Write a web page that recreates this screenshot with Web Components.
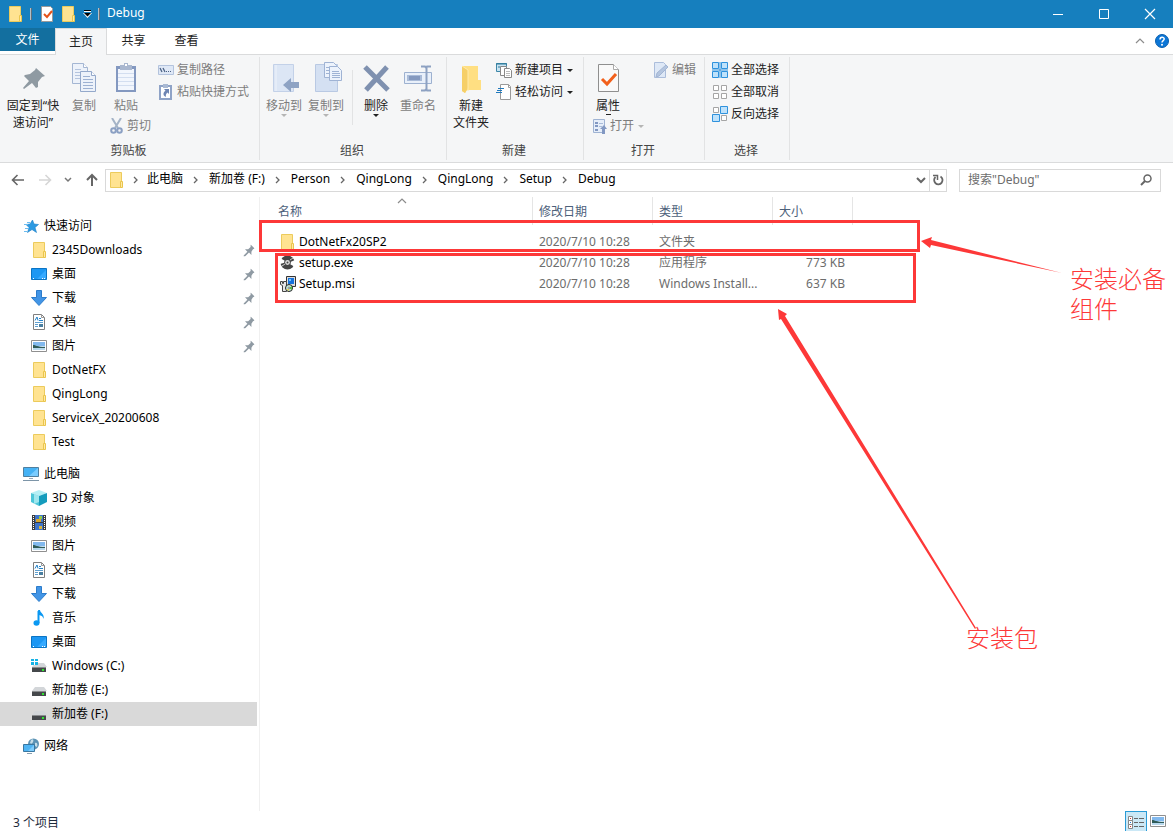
<!DOCTYPE html>
<html lang="zh-CN">
<head>
<meta charset="utf-8">
<title>Debug</title>
<style>
  html, body { margin: 0; height: 100%; }
  body {
    font: 12px/16px "Noto Sans", "Noto Sans CJK SC", sans-serif;
    color: #000; background: #fff; overflow: hidden;
  }
</style>
</head>
<body>
<explorer-window></explorer-window>

<script>
const folder = '<path d="M1.5 .5h11v15h-11z" fill="#ffe391" stroke="#eccb5c"/><path d="M11.500 9.500h2v6h-2z" fill="#ffe9a6" stroke="#eac54c"/>';
const pin = '<path d="M9 0l5 5-2 1-2 3 0 4-3-3-5 5-2 0 0-1 5-5-3-3 4 0 3-3z" fill="#8f9aa3"/>';
const drive = '<path d="M4 5h9l3 4H1z" fill="#d3d6d9"/><path d="M1 9h14v5H1z" fill="#45484b"/><path d="M1 9h14v1H1z" fill="#8a8c8e"/><path d="M11 11h2v2h-2z" fill="#2fe62f"/>';

/* name: [width, height, svg body] */
const ICONS = {
  folder: [16, 16, folder],
  navfolder: [16, 16, `<g transform="translate(1 0)">${folder}</g>`],
  pin: [14, 15, pin],
  check: [16, 16, '<path d="M2.500 .5h9l2 2v13h-11z" fill="#fff" stroke="#9a9a9a"/><path d="M5 8l3 3 5-6" fill="none" stroke="#e5531a" stroke-width="2"/>'],
  qat: [9, 10, '<path d="M1 1.500h7" stroke="#000"/><path d="M1 2.500h7" stroke="#fff"/><path d="M0 4h9L4.500 9z" fill="#fff"/><path d="M1 4h7L4.500 7.500z" fill="#000"/>'],
  min: [12, 12, '<path d="M1 6.500h10" stroke="#fff"/>'],
  max: [12, 12, '<path d="M1.500 1.500h9v9h-9z" fill="none" stroke="#fff"/>'],
  close: [12, 12, '<path d="M1 1l10 10M11 1L1 11" stroke="#fff" stroke-width="1.200"/>'],
  collapse: [10, 6, '<path d="M1 5l4-4 4 4" fill="none" stroke="#8c8c8c" stroke-width="1.200"/>'],
  help: [14, 14, '<circle cx="7" cy="7" r="6.500" fill="#0c76d6" stroke="#0a5fae"/><path d="M5 5.500c0-3 4.200-2.800 4.200-.4C9.200 6.700 7 6.700 7 8.600" fill="none" stroke="#fff" stroke-width="1.500"/><circle cx="7" cy="10.700" r="1" fill="#fff"/>'],
  bigpin: [32, 32, '<path d="M19 6l9 8-3 1-4 5 0 5-2 1-4-5-8 6-1-1 6-7-5-5 1-1 5-1 5-4z" fill="#8f9aa2"/>'],
  copy: [32, 32, '<path d="M4.500 1.500h11l4 4v16h-15z" fill="#edf2fa" stroke="#a4b6d3"/><path d="M15.500 1.500v4h4" fill="#fff" stroke="#a4b6d3"/><path d="M7 7.500h6M7 10.500h6M7 13.500h6M7 16.500h6" stroke="#b4c4de"/><path d="M12.500 9.500h11l4 4v16h-15z" fill="#edf2fa" stroke="#94a9cb"/><path d="M23.500 9.500v4h4" fill="#fff" stroke="#94a9cb"/><path d="M15 14.500h7M15 17.500h10M15 20.500h10M15 23.500h10M15 26.500h10" stroke="#9db1d2"/>'],
  paste: [32, 32, '<path d="M6 4h20v26H6z" fill="#8398c0"/><path d="M8 7h16v21H8z" fill="#f2f6fd"/><path d="M8 11.500h16M8 15.500h16M8 19.500h16M8 23.500h16" stroke="#d3def0"/><path d="M10 3h4V1h4v2h4v5H10z" fill="#a9b7cf"/><path d="M15 2h2v2h-2z" fill="#fff"/>'],
  path: [16, 12, '<path d="M.5 1.500h15v9H.5z" fill="#dfe8f6" stroke="#b3c3dd"/><path d="M2 4l2 4M5 4l2 4" stroke="#4d6487" stroke-width="1.300"/><path d="M8 7.500h1M10 7.500h1M12 7.500h1" stroke="#4d6487"/>'],
  shortcut: [16, 16, '<path d="M2 2h11v13H2z" fill="#fff" stroke="#8fa3c7" stroke-width="2"/><path d="M5 0h5v4H5z" fill="#a9b9d3"/><path d="M6 5h5v5L9.500 8.500C8 10 7.500 11 8 13 4 11 5.500 8 7.500 6.700z" fill="#6f86b3"/>'],
  cut: [14, 16, '<path d="M2 0l6 10M11 0L5 10" stroke="#a4b3c6" stroke-width="2"/><circle cx="3.500" cy="12.500" r="2.300" fill="none" stroke="#8ba0c3" stroke-width="2"/><circle cx="9.500" cy="12.500" r="2.300" fill="none" stroke="#8ba0c3" stroke-width="2"/>'],
  moveto: [32, 32, '<path d="M5.500 2.500h20v27h-20z" fill="#dce6f5" stroke="#c3d1e8"/><path d="M8 3v26" stroke="#eef3fb"/><path d="M15 23l8-7v4h8v6h-8v4z" fill="#8ea3c4"/>'],
  copyto: [32, 32, '<path d="M5.500 2.500h22v27h-22z" fill="#d4e0f2" stroke="#b9c9e3"/><path d="M14.500 .5h9l3 3v12h-12z" fill="#edf3fc" stroke="#9fb3d4"/><path d="M19.500 4.500h8l4 4v10h-12z" fill="#edf3fc" stroke="#9fb3d4"/><path d="M16 5.500h3M16 8.500h3M16 11.500h3M22 9.500h7M22 11.500h8M22 13.500h8M22 15.500h8" stroke="#9fb3d4"/>'],
  del: [32, 32, '<path d="M5 5l23 23M27 5L6 28" stroke="#7f91b0" stroke-width="5"/>'],
  rename: [32, 32, '<path d="M2.500 10.500h27v11h-27z" fill="#e9f0fa" stroke="#9db1d0"/><path d="M5 13h15v6H5z" fill="#a9bbd8"/><path d="M7 14h11v4H7z" fill="#8499bf"/><path d="M19 4.500h4l1 1 1-1h4M19 28.500h4l1-1 1 1h4M24.500 5v23" fill="none" stroke="#8da1c2" stroke-width="2"/>'],
  newfolder: [32, 32, '<path d="M7 4h16v14h3v10H12l-2 3-3-2z" fill="#ffdf82"/><path d="M7 4l6 4v18l-3 5-3-2z" fill="#f6cf67"/><path d="M7 4l6 4v21" fill="none" stroke="#ffeaab"/>'],
  newitem: [16, 16, '<path d="M.5 1.500h10v8H.5z" fill="#c9e4f2" stroke="#3d87a8"/><path d="M0 2h11M3 4v2M7 4v2" stroke="#2d7899"/><path d="M4.500 4.500h6v9h-6z" fill="#fff" stroke="#888"/><path d="M8.500 6.500h5l2 2v7h-7z" fill="#fff" stroke="#888"/><path d="M10 9.500h4M10 11.500h4M10 13.500h4" stroke="#bbb"/>'],
  access: [16, 16, '<path d="M4.500 .5h8l2 2v13h-10z" fill="#fff" stroke="#9a9a9a"/><path d="M12.500 .5v3h2" fill="none" stroke="#9a9a9a"/><path d="M2 4.500h6M1 6.500h5M0 8.500h6" stroke="#2079bd"/>'],
  props: [32, 32, '<path d="M6.500 2.500h15l5 5v22h-20z" fill="#f9f9f9" stroke="#8f8f8f"/><path d="M21.500 2.500v5h5" fill="#fff" stroke="#aaa"/><path d="M10 17l5 5 9-10" fill="none" stroke="#f2601b" stroke-width="3"/>'],
  open: [14, 16, '<path d="M.5 1.500h11v13H.5z" fill="#e6eef9" stroke="#9fb3d3"/><path d="M2 4h3v2H2zM2 7h3v2H2zM2 11h3v2H2z" fill="#8298c2"/><path d="M6 5.500h4M6 8.500h3" stroke="#a9bbd8"/><path d="M7 11l4-4 3 4h-2v5H9v-5z" fill="#8298c2"/>'],
  edit: [16, 16, '<path d="M1.500 .5h9l2 2v13h-11z" fill="#dee8f6" stroke="#abbddb"/><path d="M3 15l1-4 9-8 2 2-9 9z" fill="#b4c5df" stroke="#a2b5d3"/>'],
  all: [16, 16, '<path d="M.5 .5h6v6h-6zM9.500 .5h6v6h-6zM.5 9.500h6v6h-6zM9.500 9.500h6v6h-6z" fill="#bfe2fb" stroke="#2f92dd"/><path d="M8 0v16M0 8h16" stroke="#2f92dd"/>'],
  none: [16, 16, '<path d="M1.500 1.500h5v5h-5zM9.500 1.500h5v5h-5zM1.500 9.500h5v5h-5zM9.500 9.500h5v5h-5z" fill="#fff" stroke="#a5a5a5"/>'],
  invert: [16, 16, '<path d="M1.500 1.500h5v5h-5zM9.500 9.500h5v5h-5z" fill="#fff" stroke="#a5a5a5"/><path d="M8.500 .5h7v7h-7zM.5 8.500h7v7h-7z" fill="#bfe2fb" stroke="#2f92dd"/>'],
  back: [14, 12, '<path d="M1.500 6H13M6.500 1l-5 5 5 5" fill="none" stroke="#666" stroke-width="1.600"/>'],
  forward: [14, 12, '<path d="M1 6h11.500M7.500 1l5 5-5 5" fill="none" stroke="#d6d6d6" stroke-width="1.600"/>'],
  up: [14, 14, '<path d="M7 2v11M2 7l5-5 5 5" fill="none" stroke="#666" stroke-width="2"/>'],
  recent: [8, 6, '<path d="M1 1l3 3 3-3" fill="none" stroke="#777" stroke-width="1.500"/>'],
  drop: [10, 7, '<path d="M1 1l4 4 4-4" fill="none" stroke="#666" stroke-width="2"/>'],
  chev: [6, 8, '<path d="M1 1l3 3-3 3" fill="none" stroke="#666" stroke-width="1.300"/>'],
  refresh: [12, 14, '<path d="M8.500 3.500a4.200 4.200 0 1 1-5 .5" fill="none" stroke="#666" stroke-width="1.800"/><path d="M1 2.500h4.500v4.500" fill="none" stroke="#666" stroke-width="1.500"/>'],
  search: [12, 12, '<circle cx="7.500" cy="4.500" r="3.500" fill="none" stroke="#666" stroke-width="1.500"/><path d="M5 7L1 11" stroke="#666" stroke-width="2"/>'],
  star: [16, 16, '<path d="M9.500 2l1.500 4 4.500 .5-3.500 3 1.500 5-4.500-3-4.500 3 1.500-5-3-3 4-.5z" fill="#2c9ae2" stroke="#1b7dc4" stroke-width=".6"/><path d="M1 6.500h4M2 10.500h3M1 13.500h3M4 4.500h3" stroke="#6bbcf0"/>'],
  desktop: [16, 16, '<path d="M.5 2.500h15v11H.5z" fill="#1c97f3" stroke="#0b74c4"/><path d="M6 13L15 4v9z" fill="#35a9ff"/><path d="M2 12.500h1M11 12.500h1M13 12.500h1" stroke="#fff"/>'],
  down: [16, 16, '<path d="M5.500 .5h5v7h5L8 15.500.500 7.500h5z" fill="#4295e6" stroke="#2c7ccb"/>'],
  doc: [16, 16, '<path d="M2.500 .5h8l3 3v12h-11z" fill="#fff" stroke="#7f7f7f"/><path d="M10.500 .5v3h3" fill="none" stroke="#999"/><path d="M4 6.500l2-3.500 1 3.500M8 4.500h2M8 6.500h4" stroke="#2382c9" fill="none"/><path d="M4 8.500h8M4 10.500h3M4 12.500h3" stroke="#5f9fce"/><path d="M8 10h4v3H8z" fill="#4a7fa0"/>'],
  pic: [16, 16, '<path d="M.5 2.500h15v11H.5z" fill="#fff" stroke="#8f8f8f"/><path d="M2 4h12v4H2z" fill="#82b9ee"/><path d="M2 8c4-1 5 1 12 0v4H2z" fill="#b7d8ed"/><path d="M2 7c3 0 4 2 12 2v1H2z" fill="#2f5b58"/>'],
  pc: [16, 16, '<path d="M.5 1.500h15v9H.5z" fill="#45b2f5" stroke="#4f7f9f"/><path d="M6 10L15 2v8z" fill="#7accff"/><path d="M6 12h4v1H6z" fill="#9ab"/><path d="M0 14.500h16" stroke="#7d95a8"/>'],
  cube: [16, 16, '<path d="M0 3l8-3 8 3-8 3z" fill="#b5eff5"/><path d="M0 3l8 3v10l-8-4z" fill="#4cc6d8"/><path d="M16 3L8 6v10l8-4z" fill="#149cbd"/><path d="M3 4l5 2v6l-5 2z" fill="#9ee6ee"/>'],
  video: [16, 16, '<path d="M1 1h14v15H1z" fill="#3c3c3c"/><path d="M4 1h8v7H4zM4 9h8v7H4z" fill="#3e74c9"/><path d="M5 5h5v3H5z" fill="#d8a62b"/><path d="M8 2h3v3H8z" fill="#91c94a"/><path d="M8 12h3v3H8z" fill="#d8b43a"/><path d="M2.500 2v13M13.500 2v13" stroke="#fff" stroke-dasharray="1 1"/>'],
  music: [16, 16, '<path d="M7.500 1v12" stroke="#0a98f2" stroke-width="2"/><path d="M7 0h2c0 3 5 4 3.500 9C12 6 10 5.500 8 5z" fill="#0a98f2"/><ellipse cx="5.500" cy="13" rx="3" ry="2.700" fill="#0a98f2"/>'],
  drive: [16, 16, drive],
  sysdrive: [16, 16, drive + '<path d="M0 0h7v7H0z" fill="#fff"/><path d="M0 1h3v2H0zM4 1h3v2H4zM0 4h3v3H0zM4 4h3v3H4z" fill="#16b3e6"/>'],
  net: [16, 16, '<circle cx="10.500" cy="6" r="5.500" fill="#5c93b5"/><path d="M8 2c2-2 3 0 2 2s-2 2-3 1zM12 5c2-1 3 1 2 4l-2-1z" fill="#c6dde8"/><path d="M.5 6.500h11v7H.5z" fill="#4fb4f3" stroke="#3a77a0"/><path d="M5 13L11 7v6z" fill="#80ccfb"/><path d="M4 15.500h5" stroke="#8aa0b0"/>'],
  disc: [16, 16, '<circle cx="7.500" cy="7.500" r="7" fill="#454545"/><path d="M0 3l7 4-7 2zM15 12L8 8l7-3z" fill="#fff"/><circle cx="7.500" cy="7.500" r="3.300" fill="#454545"/><circle cx="7.500" cy="7.500" r="2.400" fill="#ddd"/><circle cx="7.500" cy="7.500" r="1" fill="#444"/><path d="M2 11l3-2M10 5l3-2" stroke="#ccc"/>'],
  msi: [16, 16, '<path d="M6.500 .5h9v10h-9z" fill="#ddd" stroke="#333"/><path d="M8 2h6v6H8z" fill="#1672dc"/><path d="M9 3h2v2H9z" fill="#73c5ff"/><path d="M.5 5.500h2v2h1v-2h3v10h-4V9.500l-2-1z" fill="#e6e6e6" stroke="#444"/><circle cx="9" cy="12" r="3.500" fill="#c9ece0" stroke="#222"/><path d="M9 12l3-2v4z" fill="#58be43"/><path d="M6 13h3v2z" fill="#f5dd53"/><circle cx="9" cy="12" r="1" fill="#fff" stroke="#333" stroke-width=".5"/>'],
  details: [18, 16, '<path d="M1.500 1.500h4v4h-4zM1.500 5.500h4v4h-4zM1.500 9.500h4v4h-4z" fill="#fff" stroke="#888"/><path d="M3 3.500h1M3 11.500h1" stroke="#c33"/><path d="M3 7.500h1" stroke="#27c"/><path d="M7 3.500h4M12 3.500h5M7 7.500h4M12 7.500h5M7 11.500h4M12 11.500h5" stroke="#666"/>'],
  caret: [6, 3, '<path d="M0 0h6L3 3z" fill="currentColor"/>'],
  dash: [6, 3, '<path d="M1 .5h5" stroke="currentColor"/>'],
};

function define(name, html, setup) {
  const template = document.createElement('template');
  template.innerHTML = html;
  customElements.define(name, class extends HTMLElement {
    connectedCallback() {
      if (this.shadowRoot) return;
      const root = this.attachShadow({ mode: 'open' });
      root.append(template.content.cloneNode(true));
      if (setup) setup(this, root);
    }
  });
}

define('ui-icon', '<style>:host{display:block;flex:none;line-height:0}svg{display:block}</style>', (el, root) => {
  const [w, h, body] = ICONS[el.getAttribute('name')];
  root.innerHTML += `<svg aria-hidden="true" width="${w}" height="${h}" viewBox="0 0 ${w} ${h}">${body}</svg>`;
});

const BUTTON = 'button{font:inherit;color:inherit;background:none;border:0;padding:0;margin:0;display:flex;align-items:center;white-space:nowrap}';

define('title-bar', `<style>
  :host{display:flex;align-items:center;height:28px;background:#167fbe;color:#fff;padding-left:8px}
  ${BUTTON}
  i{width:1px;height:12px;background:#b5bfc6;box-shadow:1px 0 #5f6f7b}
  .tools{display:flex;align-items:center;gap:6px}
  .tools i{margin-right:2px}
  .title{flex:1;margin-left:6px;line-height:28px;height:30px}
  .controls button{width:46px;height:28px;justify-content:center}
  .controls{display:flex}
</style>
<div class="tools">
  <ui-icon name="folder"></ui-icon><i></i>
  <button aria-label="属性"><ui-icon name="check"></ui-icon></button>
  <button aria-label="新建文件夹"><ui-icon name="folder"></ui-icon></button>
  <button aria-label="自定义快速访问工具栏"><ui-icon name="qat"></ui-icon></button><i></i>
</div>
<span class="title">Debug</span>
<div class="controls">
  <button aria-label="最小化"><ui-icon name="min"></ui-icon></button>
  <button aria-label="最大化"><ui-icon name="max"></ui-icon></button>
  <button aria-label="关闭"><ui-icon name="close"></ui-icon></button>
</div>`);

define('ribbon-tabs', `<style>
  :host{display:flex;height:26px;background:#fff;border-bottom:1px solid #dadbdc;color:#222}
  ${BUTTON}
  button{justify-content:center;width:53px}
  .file{width:55px;height:23px;background:#136f9f;color:#fff}
  .on{width:52px;height:27px;background:#f5f6f7;border:1px solid #dadbdc;border-bottom:0;box-sizing:border-box}
  .end{margin-left:auto;display:flex}
  .end button{width:22px}
</style>
<button class="file">文件</button><button class="on">主页</button><button>共享</button><button>查看</button>
<div class="end"><button aria-label="折叠功能区"><ui-icon name="collapse"></ui-icon></button><button aria-label="帮助"><ui-icon name="help"></ui-icon></button></div>`);

define('ribbon-group', `<style>
  :host{display:flex;flex-direction:column;flex:none;box-sizing:border-box;border-right:1px solid #e2e3e4;height:103px}
  .body{display:flex;align-items:flex-start;flex:1;padding-left:3px}
  .label{text-align:center;height:18px;line-height:17px;color:#444;margin-right:2px}
</style><div class="body"><slot></slot></div><div class="label"></div>`, (el, root) => {
  root.querySelector('.label').textContent = el.getAttribute('label');
});

define('ribbon-big', `<style>
  :host{display:block;width:42px;flex:none;color:#222}
  :host([wide]){width:60px}
  :host([off]){color:#7d7d7d}
  ${BUTTON}
  button{flex-direction:column;width:100%;padding-top:5px;line-height:17px;text-align:center;gap:3px;white-space:nowrap}
  .caret{height:3px;margin-top:-3px}
  :host([off]) .caret{color:#b5b5b5}
</style><button><span><slot></slot></span></button>`, (el, root) => {
  const b = root.querySelector('button');
  b.insertAdjacentHTML('afterbegin', `<ui-icon name="${el.getAttribute('icon')}"></ui-icon>`);
  if (el.hasAttribute('off')) b.disabled = true;
  const mark = el.getAttribute('mark');
  if (mark) b.insertAdjacentHTML('beforeend', `<ui-icon class="caret" name="${mark}"></ui-icon>`);
});

define('ribbon-small', `<style>
  :host{display:block;height:22px;color:#222}
  :host([off]){color:#7d7d7d}
  ${BUTTON}
  button{height:22px;gap:3px}
  .caret{margin-left:1px}
  :host([off]) .caret{color:#b5b5b5}
</style><button><span><slot></slot></span></button>`, (el, root) => {
  const b = root.querySelector('button');
  b.insertAdjacentHTML('afterbegin', `<ui-icon name="${el.getAttribute('icon')}"></ui-icon>`);
  if (el.hasAttribute('off')) b.disabled = true;
  if (el.hasAttribute('mark')) b.insertAdjacentHTML('beforeend', '<ui-icon class="caret" name="caret"></ui-icon>');
});

define('ribbon-bar', `<style>
  :host{display:flex;height:105px;padding-top:2px;background:#f5f6f7;border-bottom:1px solid #dadbdc}
  .stack{display:flex;flex-direction:column}
  .rows{padding-top:2px;margin-left:4px}
  .head > ribbon-big{height:58px}
  .head > ribbon-small{margin-left:6px}
  .line{width:1px;height:55px;background:#e2e3e4;margin:13px 2px 0 5px}
</style>
<ribbon-group label="剪贴板" style="width:260px">
  <ribbon-big icon="bigpin" wide>固定到“快<br>速访问”</ribbon-big>
  <ribbon-big icon="copy" off>复制</ribbon-big>
  <div class="stack head" style="width:49px"><ribbon-big icon="paste" off>粘贴</ribbon-big><ribbon-small icon="cut" off style="margin-left:5px">剪切</ribbon-small></div>
  <div class="stack rows"><ribbon-small icon="path" off>复制路径</ribbon-small><ribbon-small icon="shortcut" off>粘贴快捷方式</ribbon-small></div>
</ribbon-group>
<ribbon-group label="组织" style="width:187px">
  <ribbon-big icon="moveto" mark="caret" off>移动到</ribbon-big>
  <ribbon-big icon="copyto" mark="caret" off>复制到</ribbon-big>
  <div class="line"></div>
  <ribbon-big icon="del" mark="caret">删除</ribbon-big>
  <ribbon-big icon="rename" off>重命名</ribbon-big>
</ribbon-group>
<ribbon-group label="新建" style="width:137px">
  <ribbon-big icon="newfolder">新建<br>文件夹</ribbon-big>
  <div class="stack rows"><ribbon-small icon="newitem" mark>新建项目</ribbon-small><ribbon-small icon="access" mark>轻松访问</ribbon-small></div>
</ribbon-group>
<ribbon-group label="打开" style="width:121px">
  <div class="stack head" style="width:62px"><ribbon-big icon="props" mark="dash">属性</ribbon-big><ribbon-small icon="open" mark off>打开</ribbon-small></div>
  <div class="stack rows"><ribbon-small icon="edit" off>编辑</ribbon-small></div>
</ribbon-group>
<ribbon-group label="选择" style="width:85px">
  <div class="stack rows"><ribbon-small icon="all">全部选择</ribbon-small><ribbon-small icon="none">全部取消</ribbon-small><ribbon-small icon="invert">反向选择</ribbon-small></div>
</ribbon-group>`);

define('address-bar', `<style>
  :host{display:flex;align-items:center;height:34px;padding:0 12px 0 11px;box-sizing:border-box}
  ${BUTTON}
  .moves{display:flex;width:94px;justify-content:space-between;align-items:center;padding-right:6px;box-sizing:border-box}
  .box{display:flex;align-items:center;height:23px;box-sizing:border-box;border:1px solid #d9d9d9;background:#fff}
  .path{flex:1;padding-left:3px}
  .path a{color:#000;text-decoration:none;white-space:nowrap;padding-bottom:2px}
  .sep{width:26px;display:flex;justify-content:center}
  ui-icon + .sep{width:22px}
  .drop{margin-left:auto;width:17px;height:21px;justify-content:center}
  .refresh{width:17px;height:21px;justify-content:center;border-left:1px solid #d9d9d9}
  .search{width:202px;margin-left:12px;padding:0 8px}
  input{flex:1;min-width:0;border:0;outline:0;padding:0;font:inherit;background:none}
  input::placeholder{color:#6d6d6d;opacity:1}
</style>
<nav class="moves"><button aria-label="后退"><ui-icon name="back"></ui-icon></button><button aria-label="前进" disabled><ui-icon name="forward"></ui-icon></button><button aria-label="最近位置"><ui-icon name="recent"></ui-icon></button><button aria-label="上移"><ui-icon name="up"></ui-icon></button></nav>
<div class="box path"><ui-icon name="folder"></ui-icon></div>
<label class="box search"><input type="search" aria-label="搜索" placeholder='搜索"Debug"'><ui-icon name="search"></ui-icon></label>`, (el, root) => {
  const path = root.querySelector('.path');
  for (const part of ['此电脑', '新加卷 (F:)', 'Person', 'QingLong', 'QingLong', 'Setup', 'Debug'])
    path.insertAdjacentHTML('beforeend', `<span class="sep"><ui-icon name="chev"></ui-icon></span><a href="#">${part}</a>`);
  path.insertAdjacentHTML('beforeend', '<button class="drop" aria-label="以前的位置"><ui-icon name="drop"></ui-icon></button><button class="refresh" aria-label="刷新"><ui-icon name="refresh"></ui-icon></button>');
});

define('nav-item', `<style>
  :host{display:block}
  a{display:flex;align-items:center;gap:5px;height:24px;padding:0 1px 0 31px;margin-right:2px;box-sizing:border-box;color:#000;text-decoration:none}
  :host([top]) a{padding-left:23px}
  :host([selected]) a{background:#d9d9d9}
  span{flex:1}
  .pin{transform:scale(.8)}
</style><a href="#"><span><slot></slot></span></a>`, (el, root) => {
  const a = root.querySelector('a');
  a.insertAdjacentHTML('afterbegin', `<ui-icon name="${el.getAttribute('icon')}"></ui-icon>`);
  if (el.hasAttribute('pinned')) a.insertAdjacentHTML('beforeend', '<ui-icon class="pin" name="pin"></ui-icon>');
});

define('nav-pane', `<style>
  :host{display:block;width:260px;flex:none;box-sizing:border-box;border-right:1px solid #f0f0f0;padding-top:17px}
  section{margin-bottom:8px}
</style>
<section>
<nav-item top icon="star">快速访问</nav-item>
<nav-item icon="navfolder" pinned>2345Downloads</nav-item>
<nav-item icon="desktop" pinned>桌面</nav-item>
<nav-item icon="down" pinned>下载</nav-item>
<nav-item icon="doc" pinned>文档</nav-item>
<nav-item icon="pic" pinned>图片</nav-item>
<nav-item icon="navfolder">DotNetFX</nav-item>
<nav-item icon="navfolder">QingLong</nav-item>
<nav-item icon="navfolder">ServiceX_20200608</nav-item>
<nav-item icon="navfolder">Test</nav-item>
</section>
<section>
<nav-item top icon="pc">此电脑</nav-item>
<nav-item icon="cube">3D 对象</nav-item>
<nav-item icon="video">视频</nav-item>
<nav-item icon="pic">图片</nav-item>
<nav-item icon="doc">文档</nav-item>
<nav-item icon="down">下载</nav-item>
<nav-item icon="music">音乐</nav-item>
<nav-item icon="desktop">桌面</nav-item>
<nav-item icon="sysdrive">Windows (C:)</nav-item>
<nav-item icon="drive">新加卷 (E:)</nav-item>
<nav-item icon="drive" selected>新加卷 (F:)</nav-item>
</section>
<section><nav-item top icon="net">网络</nav-item></section>`);

define('file-list', `<style>
  :host{display:block}
  table{border-collapse:separate;border-spacing:0;table-layout:fixed;width:593px}
  th,td{padding:0 6px;text-align:left;font-weight:400;white-space:nowrap;overflow:hidden;text-overflow:ellipsis;box-sizing:border-box}
  th{height:28px;color:#4c607a;border-right:1px solid #e5e5e5;padding-top:2px}
  th:first-child{padding-left:18px}
  .head{display:grid;grid-template-columns:1fr auto 1fr;align-items:center}
  .head ui-icon{align-self:start;margin-top:-6px}
  td{height:21px;color:#6d6d6d}
  tbody::before{content:"";display:table-row;height:6px}
  td:first-child{padding-left:20px;color:#000}
  .name{display:flex;align-items:center;gap:3px}
  td:last-child{text-align:right;padding-right:8px}
</style>
<table>
<colgroup><col style="width:273px"><col style="width:120px"><col style="width:120px"><col style="width:80px"></colgroup>
<thead><tr><th aria-sort="ascending"><div class="head"><span>名称</span><ui-icon name="collapse"></ui-icon></div></th><th>修改日期</th><th>类型</th><th>大小</th></tr></thead>
<tbody>
<tr><td><div class="name"><ui-icon name="folder"></ui-icon>DotNetFx20SP2</div></td><td>2020/7/10 10:28</td><td>文件夹</td><td></td></tr>
<tr><td><div class="name"><ui-icon name="disc"></ui-icon>setup.exe</div></td><td>2020/7/10 10:28</td><td>应用程序</td><td>773 KB</td></tr>
<tr><td><div class="name"><ui-icon name="msi"></ui-icon>Setup.msi</div></td><td>2020/7/10 10:28</td><td>Windows Install...</td><td>637 KB</td></tr>
</tbody></table>`);

/* Red callouts drawn on top of the file list */
define('call-outs', `<style>
  :host{position:absolute;inset:0;pointer-events:none;color:#fd3838;font:300 24px/30px "Noto Sans CJK SC",sans-serif}
  div,span,svg{position:absolute}
  div{box-sizing:border-box;border:3px solid #fd3838}
  .folder{left:-1px;top:23px;width:661px;height:32px}
  .files{left:15px;top:56px;width:641px;height:50px}
  svg{left:0;top:0;width:100%;height:100%}
  .a{left:810px;top:66px;width:96px}
  .b{left:706px;top:425px;white-space:nowrap}
</style>
<div class="folder"></div><div class="files"></div>
<svg aria-hidden="true"><g fill="#fd3838"><path d="M661 44l11-4-1 3 131 33-131-28-1 3z"/><path d="M518 112l9 5-2 2 191 312-1 1-194-310-2 1z"/></g></svg>
<span class="a">安装必备组件</span><span class="b">安装包</span>`);

define('status-bar', `<style>
  :host{display:flex;flex:none;height:20px;overflow:hidden;padding:0 7px 0 13px;color:#1e2b3c}
  ${BUTTON}
  .count{flex:1;line-height:24px}
  .views{display:flex;gap:3px;align-items:flex-start}
  .on{width:22px;height:24px;box-sizing:border-box;border:1px solid #2a9bd6;background:#cbe8f6;justify-content:center}
  .pics{padding-top:2px}
</style>
<span class="count">3 个项目</span>
<div class="views"><button class="on" aria-label="详细信息"><ui-icon name="details"></ui-icon></button><button class="pics" aria-label="大图标"><ui-icon name="pic"></ui-icon></button></div>`);

define('explorer-window', `<style>
  :host{display:flex;flex-direction:column;height:100vh;background:#fff}
  title-bar,ribbon-tabs,ribbon-bar,address-bar{flex:none}
  .work{display:flex;flex:1;min-height:0}
  main{flex:1;min-width:0;position:relative}
</style>
<title-bar></title-bar><ribbon-tabs></ribbon-tabs><ribbon-bar></ribbon-bar><address-bar></address-bar>
<div class="work"><nav-pane></nav-pane><main><file-list></file-list><call-outs></call-outs></main></div>
<status-bar></status-bar>`);
</script>
</body>
</html>
